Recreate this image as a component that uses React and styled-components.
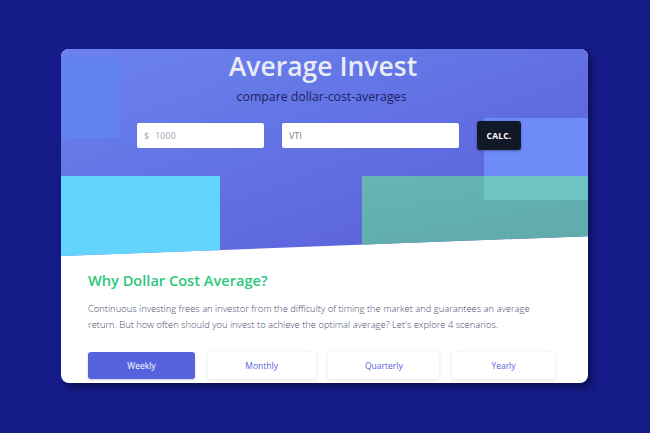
import styled, { createGlobalStyle } from "styled-components";

const GlobalStyle = createGlobalStyle`
  html, body {
    margin: 0;
    padding: 0;
    background: #151b88;
    font-family: "Open Sans", "Noto Sans", sans-serif;
  }
  * { box-sizing: border-box; }
`;

const Page = styled.div`
  width: 650px;
  height: 433px;
  padding: 49px 0 0 61px;
`;

const Card = styled.div`
  width: 527px;
  height: 334px;
  background: #ffffff;
  border-radius: 8px;
  overflow: hidden;
  box-shadow: 4px 5px 6px rgba(5, 8, 50, 0.55);
  display: flex;
  flex-direction: column;
`;

const Hero = styled.header`
  position: relative;
  height: 207px;
  flex-shrink: 0;
  background: linear-gradient(160deg, #6b83ee 0%, #6272e4 45%, #5a5bd8 100%);
  clip-path: polygon(0 0, 100% 0, 100% 90.4%, 0 100%);
  padding-top: 2px;
  display: flex;
  flex-direction: column;
  align-items: center;
`;

const Shape = styled.div`
  position: absolute;
  left: ${p => p.x}px;
  top: ${p => p.y}px;
  width: ${p => p.w}px;
  height: ${p => p.h}px;
  background: ${p => p.bg};
  z-index: 0;
`;

const Title = styled.h1`
  position: relative;
  z-index: 1;
  margin: 0 0 0 -3px;
  font-size: 26.5px;
  line-height: 31px;
  font-weight: 600;
  color: #e9ebf5;
`;

const Subtitle = styled.p`
  position: relative;
  z-index: 1;
  margin: 7px 0 0 -6px;
  font-size: 12.3px;
  line-height: 16px;
  color: #1c2163;
`;

const Controls = styled.div`
  position: relative;
  z-index: 1;
  margin-top: 16px;
  margin-left: 9px;
  display: flex;
  align-items: center;
  gap: 18px;
`;

const Field = styled.label`
  width: ${p => p.w}px;
  height: 25px;
  background: #ffffff;
  border-radius: 2px;
  display: flex;
  align-items: center;
  padding-left: 7px;
  gap: 6px;
  font-size: 9px;
  color: #a2a6b6;
`;

const Input = styled.input`
  border: none;
  outline: none;
  background: transparent;
  padding: 0;
  width: 100%;
  font-family: inherit;
  font-size: 9px;
  color: #7d8293;
  &::placeholder {
    color: #a2a6b6;
  }
`;

const CalcButton = styled.button`
  width: 44px;
  height: 29px;
  border: none;
  border-radius: 3px;
  background: #111827;
  color: #ffffff;
  font-family: inherit;
  font-size: 8.5px;
  font-weight: 700;
  letter-spacing: 0.2px;
  box-shadow: 0 1px 3px rgba(0, 0, 0, 0.3);
  padding: 0;
`;

const Section = styled.section`
  padding: 14px 27px 0;
`;

const Heading = styled.h2`
  margin: 0;
  font-size: 14.6px;
  line-height: 20px;
  font-weight: 600;
  color: #2dc67c;
`;

const Body = styled.p`
  margin: 11px 0 0;
  font-size: 9.4px;
  line-height: 16px;
  font-weight: 300;
  color: #474c6c;
  max-width: 470px;
`;

const Tabs = styled.div`
  margin-top: 19px;
  width: 467px;
  display: flex;
  justify-content: space-between;
`;

const Tab = styled.button`
  width: ${p => p.w}px;
  height: 27px;
  border: none;
  border-radius: 3px;
  font-family: inherit;
  font-size: 8.5px;
  padding: 0;
  background: ${p => (p.active ? "#5663dd" : "#ffffff")};
  color: ${p => (p.active ? "#ffffff" : "#5a64e0")};
  box-shadow: ${p => (p.active ? "0 1px 2px rgba(40,40,120,0.25)" : "0 1px 4px rgba(30,30,80,0.12)")};
`;

const tabs = [
  { label: "Weekly", w: 107 },
  { label: "Monthly", w: 108 },
  { label: "Quarterly", w: 111 },
  { label: "Yearly", w: 103 },
];

export default function App() {
  return (
    <>
      <GlobalStyle />
      <Page>
        <Card>
          <Hero>
            <Shape x={0} y={8} w={59} h={81} bg="#6283f1" />
            <Shape x={423} y={69} w={104} h={82} bg="#6f8bf8" />
            <Shape x={0} y={127} w={159} h={90} bg="#63d4fe" />
            <Shape x={301} y={127} w={226} h={90} bg="linear-gradient(170deg, #67b5b6, #5ea8a8)" />
            <Shape x={423} y={127} w={104} h={24} bg="#6fc5c4" />
            <Title>Average Invest</Title>
            <Subtitle>compare dollar-cost-averages</Subtitle>
            <Controls>
              <Field w={127}>
                <span>$</span>
                <Input placeholder="1000" />
              </Field>
              <Field w={177}>
                <Input defaultValue="VTI" />
              </Field>
              <CalcButton>CALC.</CalcButton>
            </Controls>
          </Hero>
          <Section>
            <Heading>Why Dollar Cost Average?</Heading>
            <Body>
              Continuous investing frees an investor from the difficulty of timing the market and
              guarantees an average return. But how often should you invest to achieve the optimal
              average? Let's explore 4 scenarios.
            </Body>
            <Tabs>
              {tabs.map((t, i) => (
                <Tab key={t.label} w={t.w} active={i === 0}>{t.label}</Tab>
              ))}
            </Tabs>
          </Section>
        </Card>
      </Page>
    </>
  );
}
